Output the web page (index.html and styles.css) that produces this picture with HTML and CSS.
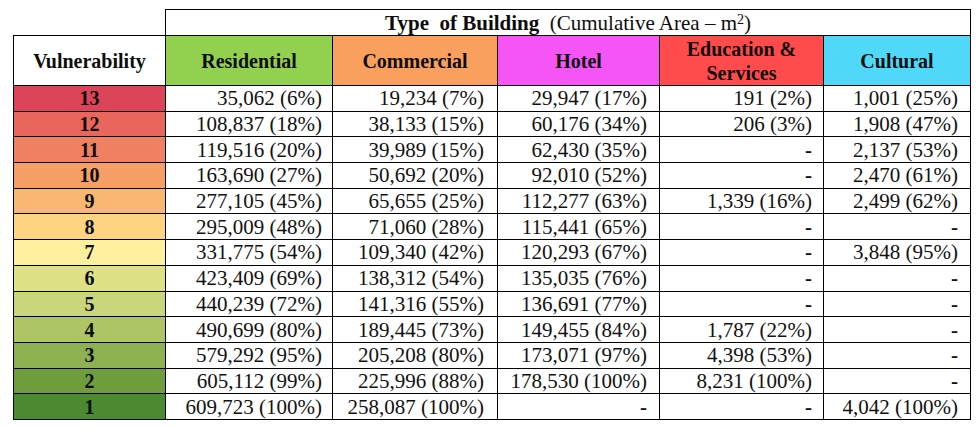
FILE: index.html
```html
<!DOCTYPE html>
<html>
<head>
<meta charset="utf-8">
<link rel="stylesheet" href="styles.css">
</head>
<body>
<table class="tbl">
  <colgroup>
    <col class="c-v"><col class="c-res"><col class="c-com"><col class="c-hot"><col class="c-edu"><col class="c-cul">
  </colgroup>
  <thead>
    <tr class="h1">
      <th class="blank"></th>
      <th colspan="5" class="title"><b>Type&nbsp; of Building</b>&nbsp; <span class="sub">(Cumulative Area – m<sup>2</sup>)</span></th>
    </tr>
    <tr class="h2">
      <th class="hv">Vulnerability</th>
      <th class="hres">Residential</th>
      <th class="hcom">Commercial</th>
      <th class="hhot">Hotel</th>
      <th class="hedu">Education &amp;<br>Services</th>
      <th class="hcul">Cultural</th>
    </tr>
  </thead>
  <tbody>
    <tr><th class="v v13">13</th><td class="r">35,062 (6%)</td><td class="m">19,234 (7%)</td><td class="h">29,947 (17%)</td><td class="e">191 (2%)</td><td class="c">1,001 (25%)</td></tr>
    <tr><th class="v v12">12</th><td class="r">108,837 (18%)</td><td class="m">38,133 (15%)</td><td class="h">60,176 (34%)</td><td class="e">206 (3%)</td><td class="c">1,908 (47%)</td></tr>
    <tr><th class="v v11">11</th><td class="r">119,516 (20%)</td><td class="m">39,989 (15%)</td><td class="h">62,430 (35%)</td><td class="e dash">-</td><td class="c">2,137 (53%)</td></tr>
    <tr><th class="v v10">10</th><td class="r">163,690 (27%)</td><td class="m">50,692 (20%)</td><td class="h">92,010 (52%)</td><td class="e dash">-</td><td class="c">2,470 (61%)</td></tr>
    <tr><th class="v v9">9</th><td class="r">277,105 (45%)</td><td class="m">65,655 (25%)</td><td class="h">112,277 (63%)</td><td class="e">1,339 (16%)</td><td class="c">2,499 (62%)</td></tr>
    <tr><th class="v v8">8</th><td class="r">295,009 (48%)</td><td class="m">71,060 (28%)</td><td class="h">115,441 (65%)</td><td class="e dash">-</td><td class="c dash">-</td></tr>
    <tr><th class="v v7">7</th><td class="r">331,775 (54%)</td><td class="m">109,340 (42%)</td><td class="h">120,293 (67%)</td><td class="e dash">-</td><td class="c">3,848 (95%)</td></tr>
    <tr><th class="v v6">6</th><td class="r">423,409 (69%)</td><td class="m">138,312 (54%)</td><td class="h">135,035 (76%)</td><td class="e dash">-</td><td class="c dash">-</td></tr>
    <tr><th class="v v5">5</th><td class="r">440,239 (72%)</td><td class="m">141,316 (55%)</td><td class="h">136,691 (77%)</td><td class="e dash">-</td><td class="c dash">-</td></tr>
    <tr><th class="v v4">4</th><td class="r">490,699 (80%)</td><td class="m">189,445 (73%)</td><td class="h">149,455 (84%)</td><td class="e">1,787 (22%)</td><td class="c dash">-</td></tr>
    <tr><th class="v v3">3</th><td class="r">579,292 (95%)</td><td class="m">205,208 (80%)</td><td class="h">173,071 (97%)</td><td class="e">4,398 (53%)</td><td class="c dash">-</td></tr>
    <tr><th class="v v2">2</th><td class="r">605,112 (99%)</td><td class="m">225,996 (88%)</td><td class="h">178,530 (100%)</td><td class="e">8,231 (100%)</td><td class="c dash">-</td></tr>
    <tr><th class="v v1">1</th><td class="r">609,723 (100%)</td><td class="m">258,087 (100%)</td><td class="h dash">-</td><td class="e dash">-</td><td class="c">4,042 (100%)</td></tr>
  </tbody>
</table>
</body>
</html>
```

FILE: styles.css
```css
html, body {
  margin: 0;
  padding: 0;
  background: #ffffff;
}

body {
  font-family: "Liberation Serif", "Times New Roman", serif;
  color: #111111;
  padding: 9px 0 0 13px;
}

.tbl {
  border-collapse: collapse;
  table-layout: fixed;
  width: 957px;
  font-family: "Liberation Serif", "Times New Roman", serif;
}

.c-v { width: 152px; }
.c-res { width: 167px; }
.c-com { width: 165px; }
.c-hot { width: 162px; }
.c-edu { width: 164px; }
.c-cul { width: 147px; }

.tbl th,
.tbl td {
  border: 1px solid #000000;
  padding: 0;
  overflow: hidden;
  white-space: nowrap;
}

.tbl th {
  font-weight: 700;
  font-size: 20px;
  text-align: center;
  color: #0d0d0d;
}

.h1 { height: 26px; }
.h1 th.blank {
  border-top: none;
  border-left: none;
}

.tbl th.title {
  font-size: 21px;
  line-height: 24px;
}
.title b { font-weight: 700; }
.title .sub { font-weight: 400; }
.title sup {
  font-size: 14px;
  line-height: 0;
  vertical-align: 6px;
}

.h2 { height: 50px; }
.h2 th { line-height: 24px; }
.hv { background: #ffffff; }
.hres { background: #92d050; }
.hcom { background: #f9a05e; }
.hhot { background: #f655f6; }
.hedu { background: #ff4b4b; }
.hcul { background: #4fd8f8; }

tbody tr { height: 25.7px; }

.tbl td {
  font-size: 21px;
  line-height: 24px;
  text-align: right;
}

.tbl th.v {
  font-size: 20px;
  line-height: 24px;
}

td.r { padding-right: 10px; }
td.m { padding-right: 13px; }
td.h { padding-right: 12px; }
td.e { padding-right: 11px; }
td.c { padding-right: 12px; }

td.dash {
  font-weight: 700;
}

.v13 { background: #dc4459; }
.v12 { background: #e8665b; }
.v11 { background: #ef8061; }
.v10 { background: #f59e66; }
.v9 { background: #f9b871; }
.v8 { background: #fcd482; }
.v7 { background: #fff09f; }
.v6 { background: #dee285; }
.v5 { background: #c9d67b; }
.v4 { background: #aec566; }
.v3 { background: #8eb252; }
.v2 { background: #6f9d3e; }
.v1 { background: #4b8a30; }
```
